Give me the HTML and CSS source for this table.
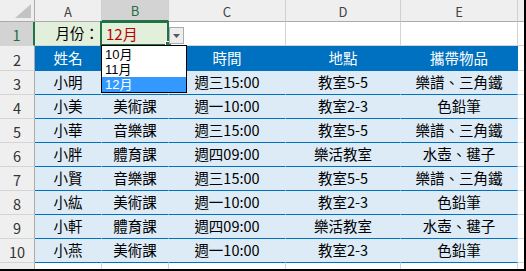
FILE: index.html
```html
<!DOCTYPE html>
<html lang="zh-Hant">
<head>
<meta charset="utf-8">
<title>月份選單</title>
<link rel="stylesheet" href="styles.css">
</head>
<body>
<div class="frame">
  <div class="sheet">
    <!-- column headers -->
    <div class="c corner"><svg class="tri" width="16" height="14" viewBox="0 0 16 14"><polygon points="16,0 16,14 0,14" fill="#C3C3C3"/></svg></div>
    <div class="c ch">A</div>
    <div class="c ch sel">B</div>
    <div class="c ch">C</div>
    <div class="c ch">D</div>
    <div class="c ch">E</div>
    <div class="c ch last"></div>

    <!-- row 1 -->
    <div class="c rh sel">1</div>
    <div class="c green right">月份：</div>
    <div class="c green left active"><span class="red">12月</span><span class="selbox"></span><span class="handle"></span></div>
    <div class="c"></div>
    <div class="c"></div>
    <div class="c"></div>
    <div class="c last"></div>

    <!-- row 2 (B2 is covered by the open list) -->
    <div class="c rh">2</div>
    <div class="c th">姓名</div>
    <div class="c th"></div>
    <div class="c th">時間</div>
    <div class="c th">地點</div>
    <div class="c th">攜帶物品</div>
    <div class="c last"></div>

    <div class="c rh">3</div>
    <div class="c bd">小明</div><div class="c bd"></div><div class="c bd">週三15:00</div><div class="c bd">教室5-5</div><div class="c bd">樂譜、三角鐵</div><div class="c last"></div>

    <div class="c rh">4</div>
    <div class="c bd">小美</div><div class="c bd">美術課</div><div class="c bd">週一10:00</div><div class="c bd">教室2-3</div><div class="c bd">色鉛筆</div><div class="c last"></div>

    <div class="c rh">5</div>
    <div class="c bd">小華</div><div class="c bd">音樂課</div><div class="c bd">週三15:00</div><div class="c bd">教室5-5</div><div class="c bd">樂譜、三角鐵</div><div class="c last"></div>

    <div class="c rh">6</div>
    <div class="c bd">小胖</div><div class="c bd">體育課</div><div class="c bd">週四09:00</div><div class="c bd">樂活教室</div><div class="c bd">水壺、毽子</div><div class="c last"></div>

    <div class="c rh">7</div>
    <div class="c bd">小賢</div><div class="c bd">音樂課</div><div class="c bd">週三15:00</div><div class="c bd">教室5-5</div><div class="c bd">樂譜、三角鐵</div><div class="c last"></div>

    <div class="c rh">8</div>
    <div class="c bd">小紘</div><div class="c bd">美術課</div><div class="c bd">週一10:00</div><div class="c bd">教室2-3</div><div class="c bd">色鉛筆</div><div class="c last"></div>

    <div class="c rh">9</div>
    <div class="c bd">小軒</div><div class="c bd">體育課</div><div class="c bd">週四09:00</div><div class="c bd">樂活教室</div><div class="c bd">水壺、毽子</div><div class="c last"></div>

    <div class="c rh">10</div>
    <div class="c bd">小燕</div><div class="c bd">美術課</div><div class="c bd">週一10:00</div><div class="c bd">教室2-3</div><div class="c bd">色鉛筆</div><div class="c last"></div>

    <!-- partial row 11 -->
    <div class="c rh end"></div>
    <div class="c end"></div><div class="c end"></div><div class="c end"></div><div class="c end"></div><div class="c end"></div><div class="c last end"></div>

    <!-- dropdown overlay -->
    <div class="ddbtn"><svg width="7" height="4" viewBox="0 0 7 4"><polygon points="0,0 7,0 3.5,4" fill="#595959"/></svg></div>
    <ul class="ddlist">
      <li>10月</li>
      <li>11月</li>
      <li class="hl">12月</li>
    </ul>
  </div>
</div>
</body>
</html>
```

FILE: styles.css
```css
html, body {
  margin: 0;
  padding: 0;
  background: #fff;
}

.frame {
  width: 526px;
  height: 271px;
  box-sizing: border-box;
  border-right: 2px solid #000;
  border-bottom: 2px solid #000;
  overflow: hidden;
  font-family: "Noto Sans CJK TC", "Noto Sans", sans-serif;
}

.sheet {
  position: relative;
  display: grid;
  grid-template-columns: 35px 67px 67px 117px 115px 117px 6px;
  grid-template-rows: 22px 24px 25px repeat(8, 24px) 6px;
  font-size: 14.5px;
  color: #000;
}

.c {
  box-sizing: border-box;
  border-right: 1px solid #D4D4D4;
  border-bottom: 1px solid #D4D4D4;
  display: flex;
  align-items: center;
  justify-content: center;
  white-space: nowrap;
  line-height: 1;
  overflow: visible;
}

.c.last {
  border-right: none;
}

.c.end {
  border-bottom: none;
}

.corner {
  background: #EFEFEF;
  border-right-color: #ABABAB;
  border-bottom-color: #ABABAB;
  align-items: flex-end;
  justify-content: flex-end;
  padding: 0 3px 3px 0;
}

.tri {
  display: block;
}

.ch {
  background: #EFEFEF;
  border-right-color: #D0D0D0;
  border-bottom-color: #ABABAB;
  color: #444;
  font-size: 13px;
  padding-top: 1px;
}

.ch.sel {
  background: #D3D3D3;
  color: #1E6E43;
  border-bottom: 2px solid #217346;
}

.rh {
  background: #EFEFEF;
  border-right-color: #ABABAB;
  border-bottom-color: #D4D4D4;
  color: #333;
  font-size: 14.5px;
  padding-top: 4px;
}

.rh.sel {
  background: #D3D3D3;
  color: #1E6E43;
  border-right: 2px solid #217346;
}

.green {
  background: #E2EFDA;
}

.right {
  justify-content: flex-end;
  padding-right: 2px;
}

.left {
  justify-content: flex-start;
  padding-left: 4px;
  font-size: 15px;
}

.red {
  color: #C00000;
}

.active {
  position: relative;
}

.selbox {
  position: absolute;
  left: -2px;
  top: -1px;
  width: 69px;
  height: 25px;
  box-sizing: border-box;
  border: 2px solid #217346;
  pointer-events: none;
}

.handle {
  position: absolute;
  right: -4px;
  bottom: -3px;
  width: 5px;
  height: 5px;
  background: #217346;
  border: 1px solid #fff;
}

.th {
  background: #0070C0;
  color: #fff;
  border-right-color: transparent;
  border-bottom-color: transparent;
}

.bd {
  background: #DDEBF7;
  border-right-color: transparent;
  border-bottom-color: #0070C0;
}

.ddbtn {
  position: absolute;
  left: 169px;
  top: 27px;
  width: 15px;
  height: 17px;
  box-sizing: border-box;
  background: #EDEDED;
  border: 1px solid #ABABAB;
  display: flex;
  align-items: center;
  justify-content: center;
}

.ddbtn svg {
  display: block;
}

.ddlist {
  position: absolute;
  left: 101px;
  top: 45px;
  width: 86px;
  height: 48px;
  box-sizing: border-box;
  margin: 0;
  padding: 1px 0 0 0;
  list-style: none;
  background: #fff;
  border: 1px solid #000;
  font-family: "Liberation Sans", "Noto Sans CJK TC", sans-serif;
  font-size: 13px;
}

.ddlist li {
  height: 15px;
  line-height: 15px;
  padding-left: 3px;
  color: #000;
}

.ddlist li.hl {
  background: #3399FF;
  color: #fff;
}
```
